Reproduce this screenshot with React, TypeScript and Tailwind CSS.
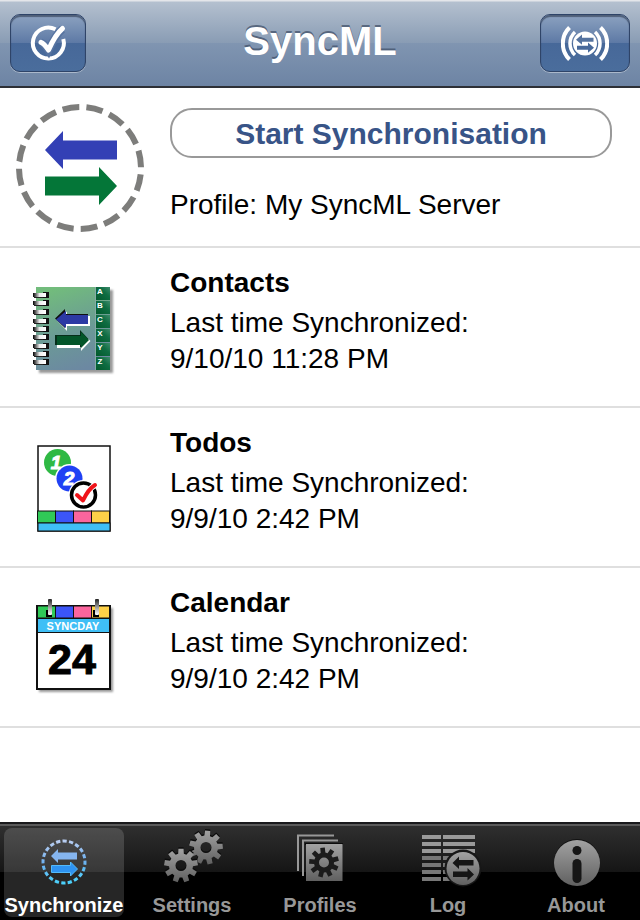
import { useState, type ReactNode } from 'react'

// Closed outline of a toothed wheel plus its centre hole (drawn with evenodd)
function gearPath(cx: number, cy: number, outer: number, inner: number, hole: number, teeth = 9, turn = 0) {
  const step = (Math.PI * 2) / teeth
  const points: string[] = []
  for (let i = 0; i < teeth; i++) {
    const a = -Math.PI / 2 + turn + i * step
    const corners = [
      [inner, -0.34],
      [outer, -0.22],
      [outer, 0.22],
      [inner, 0.34],
    ]
    corners.forEach(([r, f]) => {
      points.push(`${(cx + r * Math.cos(a + f * step)).toFixed(2)} ${(cy + r * Math.sin(a + f * step)).toFixed(2)}`)
    })
  }
  return `M${points.join('L')}Z M${cx - hole} ${cy}a${hole} ${hole} 0 1 0 ${hole * 2} 0a${hole} ${hole} 0 1 0 ${-hole * 2} 0Z`
}

function CheckIcon() {
  return (
    <svg className="h-10 w-10" viewBox="0 0 40 40" fill="none" stroke="#fff">
      <path d="M27.500 6.300A15.500 15.500 0 1 0 35.300 16" strokeWidth="4" />
      <path d="M13 19.500c3 1 5 4 7.500 7.800C24 20 28 11 34.500 6" stroke="#5673a0" strokeWidth="8" />
      <path d="M13 19.300c3 1 5 4 7.500 7.700C24 19 28 11 34.500 5.500" strokeWidth="5" strokeLinecap="round" strokeLinejoin="round" />
    </svg>
  )
}

function BroadcastIcon() {
  return (
    <svg className="h-9 w-12" viewBox="0 0 48 36" fill="none" stroke="#fff">
      <circle cx="24" cy="18.500" r="12" fill="#fff" stroke="none" />
      <path d="M8.500 2.500A22.500 22.500 0 0 0 8.500 34.500M39.500 2.500A22.500 22.500 0 0 1 39.500 34.500" strokeWidth="4" />
      <path d="M14 7A15.700 15.700 0 0 0 14 30M34 7A15.700 15.700 0 0 1 34 30" strokeWidth="3.500" />
      <path d="M15 14.800l6-5.300v3.300h11.500v4H21v3z" fill="#55739f" stroke="none" />
      <path d="M33 22.800l-6-5.300v3.300H16v4h11v3z" fill="#48699a" stroke="none" />
    </svg>
  )
}

function SyncLogo() {
  return (
    <svg className="h-32 w-32" viewBox="0 0 128 128">
      <circle cx="64" cy="64" r="61" fill="none" stroke="#7d7d7b" strokeWidth="6" pathLength="160" strokeDasharray="7 3" transform="rotate(6 64 64)" />
      <path d="M29 46l18-19v9.500h54v19H47v9.500z" fill="#3340b5" />
      <path d="M101 82L83 63v9.500H29v19h54v9.500z" fill="#047638" />
    </svg>
  )
}

function ContactsIcon() {
  const rings = [19, 27, 36, 45, 53, 61, 70, 78, 86]
  return (
    <svg className="h-[110px] w-[110px]" viewBox="0 0 110 110">
      <defs>
        <linearGradient id="cover" x1="0.3" y1="0" x2="0.6" y2="1">
          <stop offset="0" stopColor="#72bc7c" />
          <stop offset="0.55" stopColor="#6b9a96" />
          <stop offset="1" stopColor="#6c88a2" />
        </linearGradient>
        <linearGradient id="letterTab" x1="0" y1="1" x2="1" y2="0">
          <stop offset="0" stopColor="#02592c" />
          <stop offset="0.6" stopColor="#0f6d43" />
          <stop offset="1" stopColor="#3d8a6b" />
        </linearGradient>
        <linearGradient id="ring" x1="0" y1="0" x2="1" y2="0">
          <stop offset="0" stopColor="#000" />
          <stop offset="0.5" stopColor="#eee" />
          <stop offset="1" stopColor="#fff" />
        </linearGradient>
        <filter id="soft">
          <feGaussianBlur stdDeviation="1" />
        </filter>
      </defs>
      <path d="M19 15h74v83H19z" fill="#999" filter="url(#soft)" />
      <path d="M16 12h74v83H16z" fill="url(#cover)" />
      <path d="M75 12h1v83h-1z" fill="#86aaa5" />
      {['A', 'B', 'C', 'X', 'Y', 'Z'].map((letter, i) => (
        <g key={letter}>
          <rect x="76" y={12 + i * 14} width="14" height="13" fill="url(#letterTab)" />
          <text x="80" y={19 + i * 14} fill="#fff" fontSize="8" fontWeight="700" textAnchor="middle">
            {letter}
          </text>
        </g>
      ))}
      {rings.map((y) => (
        <g key={y}>
          <rect x="23" y={y - 2} width="6" height="6" fill="#111" />
          <rect x="13" y={y - 1} width="13" height="4" fill="url(#ring)" />
          <rect x="14" y={y + 3} width="9" height="1" fill="#222" />
        </g>
      ))}
      <path d="M37 45.500l10-9v4.500h23v10H47v5z" fill="#fff" />
      <path d="M35 43.500l10-9.500v5h23v10H45v4z" fill="#101010" />
      <path d="M36 44.500l10-8.500v4h22v9H46v4z" fill="#2c3aa4" />
      <path d="M70.500 66L61 57v5H37v11h24v3z" fill="#fff" />
      <path d="M68.500 64L60 55v5H35v10h25v3z" fill="#062f1a" />
      <path d="M69 65L61 57v4H37v9h24v3z" fill="#035529" />
    </svg>
  )
}

function ColourStrip({ y, height }: { y: number; height: number }) {
  return (
    <g stroke="#111" strokeWidth="1">
      <rect x="17.500" y={y} width="18" height={height} fill="#30c957" />
      <rect x="35.500" y={y} width="18" height={height} fill="#3b55f8" />
      <rect x="53.500" y={y} width="18" height={height} fill="#fb659d" />
      <rect x="71.500" y={y} width="18" height={height} fill="#fed148" />
    </g>
  )
}

function TodosIcon() {
  return (
    <svg className="h-[110px] w-[110px]" viewBox="0 0 110 110">
      <rect x="18" y="11" width="72" height="85" fill="#fff" stroke="#111" strokeWidth="1.500" />
      <ColourStrip y={76} height={12} />
      <rect x="18" y="88" width="72" height="8" fill="#3fbff6" stroke="#111" />
      <circle cx="37.500" cy="27.500" r="13.500" fill="#2fb944" />
      <circle cx="49.500" cy="43.500" r="14.500" fill="#fff" />
      <circle cx="49.500" cy="43.500" r="13" fill="#2041f4" />
      <g fill="#fff" stroke="#fff" fontSize="19" fontWeight="700" fontStyle="italic" textAnchor="middle">
        <text x="36" y="34">1</text>
        <text x="49" y="50">2</text>
      </g>
      <circle cx="63.500" cy="60" r="15" fill="#fff" />
      <circle cx="63.500" cy="60" r="12" fill="#fff" stroke="#000" strokeWidth="3.500" />
      <path d="M57 60l6 5.500C66 59 70 53 75 50" fill="none" stroke="#fff" strokeWidth="6" />
      <path d="M57 60l6 5.500C66 59 70 53 75 50" fill="none" stroke="#f0141a" strokeWidth="4" strokeLinecap="round" strokeLinejoin="round" />
    </svg>
  )
}

function CalendarIcon() {
  return (
    <svg className="h-[110px] w-[110px]" viewBox="0 5 110 110">
      <defs>
        <linearGradient id="hook" x1="0" y1="0" x2="0" y2="1">
          <stop offset="0" stopColor="#222" />
          <stop offset="0.5" stopColor="#999" />
          <stop offset="1" stopColor="#fff" />
        </linearGradient>
      </defs>
      <path d="M19 18h74v84H19z" fill="#999" filter="url(#soft)" />
      <rect x="17" y="16" width="73" height="83" fill="#fff" stroke="#111" strokeWidth="2" />
      <ColourStrip y={16} height={12} />
      <rect x="17.500" y="28.500" width="72" height="14" fill="#3fbff6" stroke="#111" />
      <text x="53" y="40" fill="#fff" fontSize="11" fontWeight="700" textAnchor="middle">
        SYNCDAY
      </text>
      <text x="52" y="84" fill="#000" stroke="#000" fontSize="43" fontWeight="700" textAnchor="middle">
        24
      </text>
      {[49, 96].map((x) => (
        <g key={x}>
          <rect x={x - 23} y="20" width="6" height="7" fill="#000" />
          <rect x={x - 21} y="9" width="4" height="16" rx="1" fill="url(#hook)" />
        </g>
      ))}
    </svg>
  )
}

function SyncTabIcon({ active }: { active: boolean }) {
  const paint = active ? 'url(#blue)' : 'url(#grey)'
  return (
    <svg className="h-15 w-17" viewBox="0 0 68 60">
      <circle cx="34" cy="34" r="21" fill="none" stroke={paint} strokeWidth="3" pathLength="200" strokeDasharray="6.500 3.500" transform="rotate(-4 34 34)" />
      <path d="M21 28l7-7v3.500h19v7H28V35z" fill={active ? '#85b5ee' : paint} />
      <path d="M47.500 41l-7-7v3.500h-19v7h19V48z" fill={active ? '#2e93f2' : paint} stroke={active ? '#53bafb' : 'none'} />
    </svg>
  )
}

function SettingsTabIcon() {
  return (
    <svg className="h-15 w-17" viewBox="0 0 68 60" fillRule="evenodd">
      <path d={gearPath(48, 18, 17, 12, 5.5, 9, 0.1)} fill="#0c0c0c" />
      <path d={gearPath(48, 19.5, 17, 12, 5.5, 9, 0.1)} fill="url(#grey)" />
      <path d={gearPath(23, 36, 17, 12, 5.5, 9, 0)} fill="#0c0c0c" />
      <path d={gearPath(23, 37.5, 17, 12, 5.5, 9, 0)} fill="url(#grey)" />
    </svg>
  )
}

function ProfilesTabIcon() {
  return (
    <svg className="h-15 w-17" viewBox="0 0 68 60">
      <path d="M12 43V7.500H48M17 48V12.500H52" fill="none" stroke="#989898" strokeWidth="2" />
      <path d="M19 15h38v2H19z" fill="#0c0c0c" />
      <path d="M20 16h36.500v37H20z" fill="url(#grey)" />
      <path d={gearPath(38, 34.5, 15, 10, 5, 9, -0.1)} fill="#1b1b1b" fillRule="evenodd" />
    </svg>
  )
}

function LogTabIcon() {
  return (
    <svg className="h-15 w-17" viewBox="0 0 68 60">
      {[7, 14, 21, 28, 35, 42, 49].map((y) => (
        <path key={y} d={`M8 ${y}h19v4H8zM29 ${y}h32v4H29z`} fill={y < 27 ? '#999' : '#777'} />
      ))}
      <circle cx="49" cy="40" r="18.500" fill="#171717" />
      <circle cx="49" cy="40.500" r="16.500" fill="url(#grey)" />
      <path d="M38.500 35l6.500-6.500V32h14.500v5.500H45V41z" fill="#151515" />
      <path d="M60 46.500L53.500 40v3.500H39V49h14.500v3.500z" fill="#151515" />
    </svg>
  )
}

function AboutTabIcon() {
  return (
    <svg className="h-15 w-17" viewBox="0 0 68 60">
      <circle cx="35" cy="34" r="23" fill="#111" />
      <circle cx="35" cy="35" r="23" fill="url(#grey)" />
      <circle cx="35" cy="22.500" r="4.500" fill="#161616" />
      <rect x="30.500" y="31" width="9" height="24" rx="4.500" fill="#161616" />
    </svg>
  )
}

const sources = [
  { name: 'Contacts', date: '9/10/10 11:28 PM', icon: <ContactsIcon /> },
  { name: 'Todos', date: '9/9/10 2:42 PM', icon: <TodosIcon /> },
  { name: 'Calendar', date: '9/9/10 2:42 PM', icon: <CalendarIcon /> },
]

const tabs = ['Synchronize', 'Settings', 'Profiles', 'Log', 'About']

function BarButton({ label, className, children }: { label: string; className: string; children: ReactNode }) {
  return (
    <button
      aria-label={label}
      className={`flex h-[58px] items-center justify-center rounded-[10px] border border-[#2f4468] bg-[linear-gradient(#8ca2c0,#5d79a5_50%,#476899_50%,#4a6d9c)] shadow-[inset_0_2px_1px_rgba(20,30,50,0.5),0_1px_0_rgba(255,255,255,0.4)] ${className}`}
    >
      {children}
    </button>
  )
}

export default function App() {
  const [tab, setTab] = useState('Synchronize')

  const tabIcons: Record<string, ReactNode> = {
    Synchronize: <SyncTabIcon active={tab === 'Synchronize'} />,
    Settings: <SettingsTabIcon />,
    Profiles: <ProfilesTabIcon />,
    Log: <LogTabIcon />,
    About: <AboutTabIcon />,
  }

  return (
    <div className="flex min-h-screen flex-col bg-white font-['Liberation_Sans',Arial,sans-serif] text-black">
      {/* Shared paints for the tab icons */}
      <svg className="absolute h-0 w-0" aria-hidden="true">
        <defs>
          <linearGradient id="grey" x1="0" y1="0" x2="0" y2="1">
            <stop offset="0" stopColor="#a2a2a2" />
            <stop offset="1" stopColor="#606060" />
          </linearGradient>
          <linearGradient id="blue" x1="0" y1="0" x2="0" y2="1">
            <stop offset="0" stopColor="#b9cdf0" />
            <stop offset="0.5" stopColor="#6eb0f0" />
            <stop offset="1" stopColor="#4bd0fa" />
          </linearGradient>
        </defs>
      </svg>

      <header className="grid h-22 grid-cols-[90px_1fr_90px] items-center border-b-2 border-[#2d3036] bg-[linear-gradient(#e4e6ea_1px,#b4c0cf_2px,#899cb4_50%,#8095b1_50%,#6d84a4)] px-2.5">
        <BarButton label="Select" className="w-19">
          <CheckIcon />
        </BarButton>
        <h1 className="pb-1 text-center text-[40px] leading-10 font-bold text-white [text-shadow:0_-2px_0_rgba(60,75,100,0.7)]">SyncML</h1>
        <BarButton label="Broadcast" className="w-full">
          <BroadcastIcon />
        </BarButton>
      </header>

      <main className="flex-1">
        <section className="flex h-40 border-b-2 border-[#dfdfdf]">
          <div className="w-[170px] shrink-0 pt-4 pl-4">
            <SyncLogo />
          </div>
          <div className="flex-1 pt-5 pr-7">
            <button className="h-[50px] w-full rounded-[22px] border-2 border-[#999] bg-white text-[30px] font-bold text-[#385487]">
              Start Synchronisation
            </button>
            <p className="mt-[29px] text-[28px] leading-9">Profile: My SyncML Server</p>
          </div>
        </section>

        <ul>
          {sources.map((source) => (
            <li key={source.name} className="flex h-40 border-b-2 border-[#dfdfdf]">
              <div className="w-[170px] shrink-0 pt-[27px] pl-5">{source.icon}</div>
              <div className="flex-1 pt-[15px]">
                <h2 className="mb-0.5 text-[28px] leading-10 font-bold">{source.name}</h2>
                <p className="text-[28px] leading-9">Last time Synchronized:</p>
                <p className="text-[28px] leading-9">{source.date}</p>
              </div>
            </li>
          ))}
        </ul>
      </main>

      <nav className="grid h-[98px] grid-cols-5 border-t-2 border-[#1a1a1c] bg-[linear-gradient(#5a5a5a_2px,#2f2f2f_2px,#151515_50%,#000_50%)]">
        {tabs.map((name) => (
          <button
            key={name}
            onClick={() => setTab(name)}
            aria-current={tab === name ? 'page' : undefined}
            className={`m-1 flex flex-col items-center rounded-lg text-xl leading-6 font-bold ${tab === name ? 'bg-white/15 text-white' : 'text-[#989898]'}`}
          >
            {tabIcons[name]}
            <span className="mt-[5px]">{name}</span>
          </button>
        ))}
      </nav>
    </div>
  )
}
